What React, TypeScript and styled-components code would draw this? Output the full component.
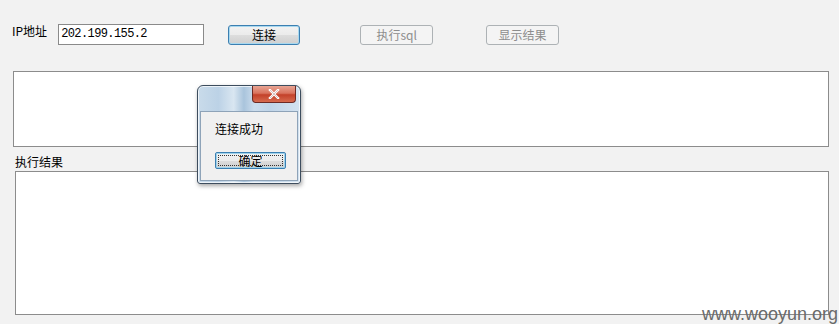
import React from "react";
import styled, { createGlobalStyle } from "styled-components";

const Global = createGlobalStyle`
  html, body { margin: 0; padding: 0; background: #f2f2f2; }
  body { font-family: "Noto Sans CJK SC", "Liberation Sans", sans-serif; }
`;

const Page = styled.div`
  position: relative;
  width: 839px;
  height: 324px;
  overflow: hidden;
  background: #f2f2f2;
  display: flex;
  flex-direction: column;
`;

const Toolbar = styled.div`
  display: flex;
  align-items: center;
  height: 21px;
  margin-top: 24px;
  padding-left: 12px;
`;

const Label = styled.span<{ $mr?: number }>`
  font-family: "Noto Sans CJK SC", sans-serif;
  font-size: 12px;
  line-height: 14px;
  color: #000;
  margin-right: ${(p) => p.$mr ?? 0}px;
  align-self: flex-start;
`;

const IpInput = styled.div`
  box-sizing: border-box;
  width: 146px;
  height: 21px;
  border: 1px solid #8a8a8a;
  background: #fff;
  font-family: "Liberation Mono", monospace;
  font-size: 12px;
  line-height: 19px;
  padding-left: 2px;
  color: #000;
  letter-spacing: -0.6px;
`;

const Button = styled.div<{ $w: number; $ml: number; $disabled?: boolean }>`
  box-sizing: border-box;
  width: ${(p) => p.$w}px;
  height: 20px;
  margin-left: ${(p) => p.$ml}px;
  border-radius: 3px;
  display: flex;
  align-items: center;
  justify-content: center;
  font-size: 12px;
  font-family: "Noto Sans CJK SC", sans-serif;
  ${(p) =>
    p.$disabled
      ? `
    border: 1px solid #adb2b5;
    background: #f4f4f4;
    color: #8d8d8d;
  `
      : `
    border: 1px solid #3c7fb1;
    box-shadow: inset 0 0 0 1px #a8d8ef;
    background: linear-gradient(#f2f2f2 0%, #ebebeb 50%, #dddddd 51%, #cfcfcf 100%);
    color: #000;
  `}
`;

const Memo = styled.div<{ $ml: number; $mt: number; $w: number; $h: number }>`
  box-sizing: border-box;
  margin-left: ${(p) => p.$ml}px;
  margin-top: ${(p) => p.$mt}px;
  width: ${(p) => p.$w}px;
  height: ${(p) => p.$h}px;
  background: #fff;
  border: 1px solid #8c8c8c;
`;

const SectionLabel = styled.div`
  margin-left: 15px;
  margin-top: 8px;
  font-size: 12px;
  line-height: 14px;
  height: 14px;
  color: #000;
`;

const Watermark = styled.div`
  position: absolute;
  right: 1px;
  bottom: 0px;
  font-family: "Liberation Sans", Arial, sans-serif;
  font-size: 18px;
  color: #6a6a6a;
  line-height: 20px;
`;

const Dialog = styled.div`
  position: absolute;
  left: 197px;
  top: 85px;
  width: 104px;
  height: 99px;
  box-sizing: border-box;
  border: 1px solid #3d4d5e;
  border-radius: 6px 6px 3px 3px;
  background: linear-gradient(90deg, #c9dbea 0%, #bcd2e6 20%, #d9e6f1 35%, #a9c4dc 45%, #cbdcec 55%, #bfd4e8 70%, #d4e3f0 100%);
  box-shadow: 1px 2px 4px rgba(0, 0, 0, 0.35), inset 0 0 0 1px rgba(255, 255, 255, 0.7);
  display: flex;
  flex-direction: column;
  padding: 0 2px 2px 2px;
`;

const TitleBar = styled.div`
  height: 25px;
  display: flex;
  justify-content: flex-end;
  align-items: flex-start;
`;

const CloseBtn = styled.div`
  width: 44px;
  height: 17px;
  margin-right: 2px;
  box-sizing: border-box;
  border: 1px solid #6d2a24;
  border-top: none;
  border-radius: 0 0 4px 4px;
  background: linear-gradient(#e8a493 0%, #d9735e 45%, #c3412a 55%, #d66a4e 100%);
  display: flex;
  align-items: center;
  justify-content: center;
`;

const Client = styled.div`
  flex: 1;
  box-sizing: border-box;
  background: #f0f0f0;
  border: 1px solid #8ea3b8;
  display: flex;
  flex-direction: column;
  padding-left: 14px;
`;

const Message = styled.div`
  margin-top: 10px;
  font-size: 12px;
  line-height: 14px;
  color: #000;
`;

const OkButton = styled.div`
  margin-top: 16px;
  width: 71px;
  height: 17px;
  box-sizing: border-box;
  border: 1px solid #3c7fb1;
  border-radius: 2px;
  box-shadow: inset 0 0 0 1px #9fd3ec;
  background: linear-gradient(#f2f2f2 0%, #ebebeb 50%, #dddddd 51%, #cfcfcf 100%);
  display: flex;
  align-items: center;
  justify-content: center;
  font-size: 12px;
  color: #000;
  position: relative;
  &::after {
    content: "";
    position: absolute;
    inset: 2px;
    border: 1px dotted #333;
  }
`;

export default function App() {
  return (
    <>
      <Global />
      <Page>
        <Toolbar>
          <Label $mr={11}>IP地址</Label>
          <IpInput>202.199.155.2</IpInput>
          <Button $w={72} $ml={24}>连接</Button>
          <Button $w={73} $ml={60} $disabled>执行sql</Button>
          <Button $w={73} $ml={53} $disabled>显示结果</Button>
        </Toolbar>
        <Memo $ml={13} $mt={26} $w={816} $h={76} />
        <SectionLabel>执行结果</SectionLabel>
        <Memo $ml={15} $mt={2} $w={814} $h={144} />
        <Watermark>www.wooyun.org</Watermark>
        <Dialog>
          <TitleBar>
            <CloseBtn>
              <svg width="12" height="10" viewBox="0 0 12 10">
                <path d="M2 1 L10 9 M10 1 L2 9" stroke="#fff" strokeWidth="2.4" strokeLinecap="square" />
                <path d="M2 1 L10 9 M10 1 L2 9" stroke="#5a1a10" strokeWidth="0.6" opacity="0.4" />
              </svg>
            </CloseBtn>
          </TitleBar>
          <Client>
            <Message>连接成功</Message>
            <OkButton>确定</OkButton>
          </Client>
        </Dialog>
      </Page>
    </>
  );
}
